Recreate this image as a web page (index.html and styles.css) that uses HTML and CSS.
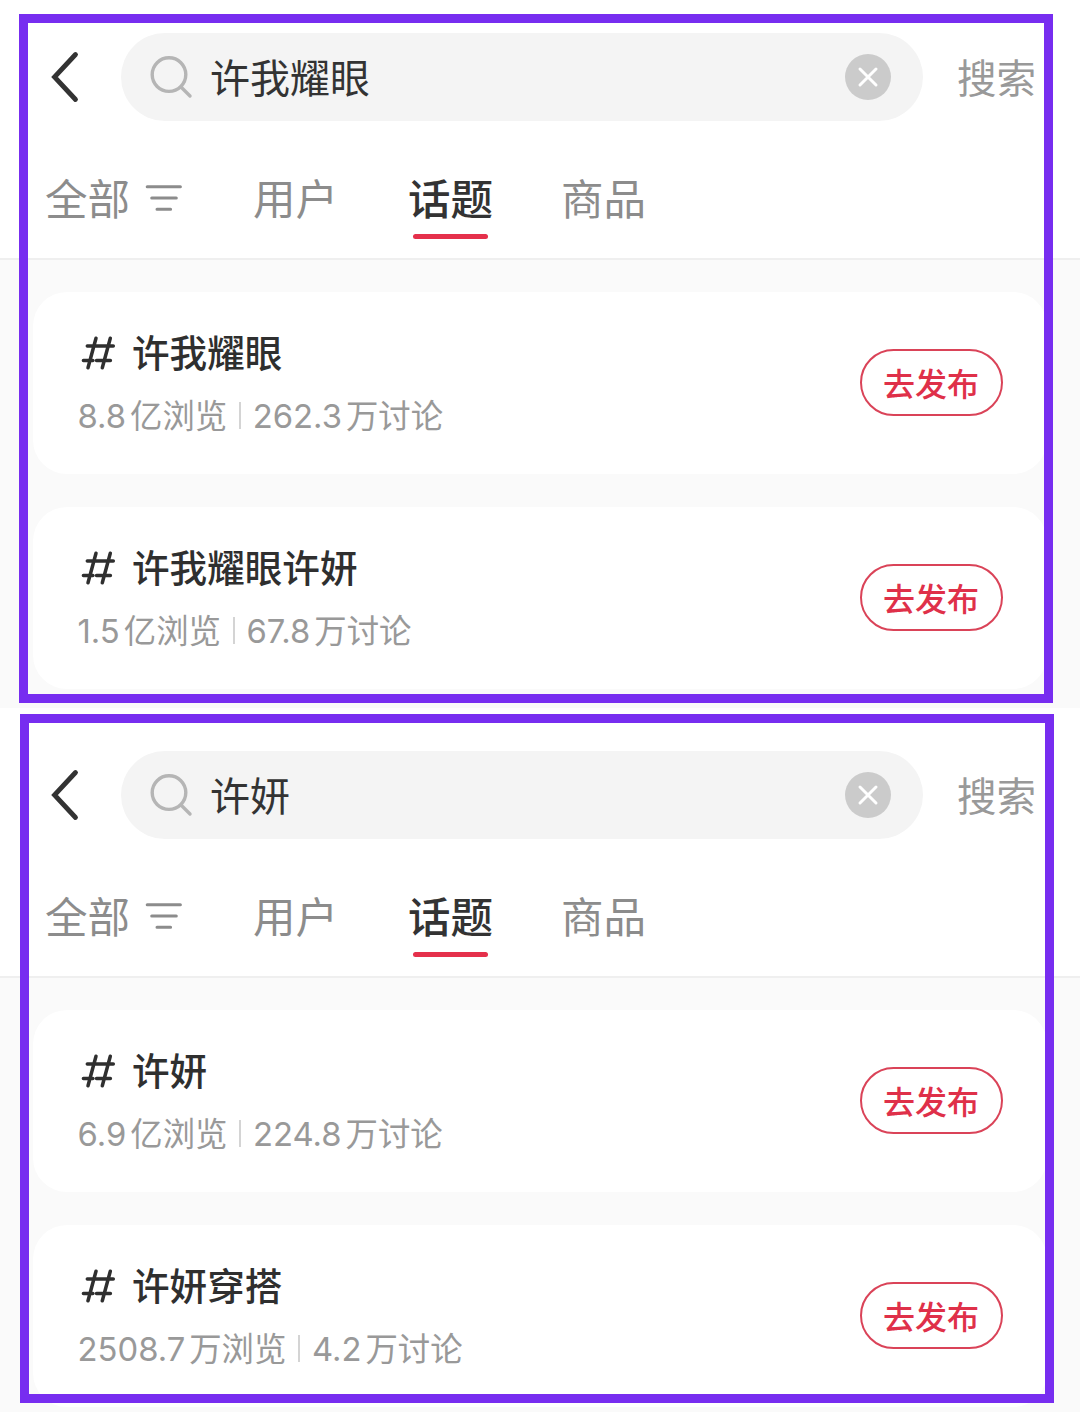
FILE: index.html
```html
<!DOCTYPE html>
<html lang="zh-CN">
<head>
<meta charset="utf-8">
<title>话题搜索</title>
<link rel="stylesheet" href="styles.css">
</head>
<body>
<svg class="sprite" aria-hidden="true">
  <symbol id="back" viewBox="0 0 30 54"><path d="M25.5 4.5 4.5 27l21 22.5" fill="none" stroke="#333" stroke-width="4.8" stroke-linecap="round" stroke-linejoin="miter"/></symbol>
  <symbol id="lens" viewBox="0 0 44 44"><g fill="none" stroke="#b5b5b5" stroke-width="3.4" stroke-linecap="round"><circle cx="20" cy="19.6" r="16.8"/><path d="m32 32 9 9"/></g></symbol>
  <symbol id="clear" viewBox="0 0 46 46"><circle cx="23" cy="23" r="23" fill="#cbcbcb"/><path d="m15 15 16 16M31 15 15 31" stroke="#fff" stroke-width="3" stroke-linecap="round"/></symbol>
  <symbol id="filter" viewBox="0 0 38 28"><path d="M2.2 2.7h33.2M6.7 14h24.6M12 25.3h13.6" stroke="#8c8c8c" stroke-width="3" stroke-linecap="round"/></symbol>
  <symbol id="hash" viewBox="0 0 36 36"><path d="M15 3.2 7 32.8M29.3 3.2l-8 29.6M6.3 11h26M2.4 25.6h9.5M15.5 25.6h13.9" fill="none" stroke="#2f2f2f" stroke-width="3.5" stroke-linecap="round"/></symbol>
</svg>

<section class="screen screen-first">
  <header class="head">
    <div class="search-row">
      <svg class="back"><use href="#back"/></svg>
      <div class="field">
        <svg class="lens"><use href="#lens"/></svg>
        <span class="query">许我耀眼</span>
        <svg class="clear"><use href="#clear"/></svg>
      </div>
      <span class="submit">搜索</span>
    </div>
    <nav class="tabs">
      <span class="tab tab-all">全部<svg class="filter"><use href="#filter"/></svg></span>
      <span class="tab tab-user">用户</span>
      <span class="tab tab-topic active">话题</span>
      <span class="tab">商品</span>
    </nav>
  </header>
  <main class="list">
    <article class="card">
      <div class="info">
        <h2 class="title"><svg class="hash"><use href="#hash"/></svg>许我耀眼</h2>
        <p class="stats"><span class="num">8.8</span>亿浏览<i class="bar"></i><span class="num">262.3</span>万讨论</p>
      </div>
      <button class="post">去发布</button>
    </article>
    <article class="card">
      <div class="info">
        <h2 class="title"><svg class="hash"><use href="#hash"/></svg>许我耀眼许妍</h2>
        <p class="stats"><span class="num">1.5</span>亿浏览<i class="bar"></i><span class="num">67.8</span>万讨论</p>
      </div>
      <button class="post">去发布</button>
    </article>
  </main>
  <div class="frame"></div>
</section>

<section class="screen screen-second">
  <header class="head">
    <div class="search-row">
      <svg class="back"><use href="#back"/></svg>
      <div class="field">
        <svg class="lens"><use href="#lens"/></svg>
        <span class="query">许妍</span>
        <svg class="clear"><use href="#clear"/></svg>
      </div>
      <span class="submit">搜索</span>
    </div>
    <nav class="tabs">
      <span class="tab tab-all">全部<svg class="filter"><use href="#filter"/></svg></span>
      <span class="tab tab-user">用户</span>
      <span class="tab tab-topic active">话题</span>
      <span class="tab">商品</span>
    </nav>
  </header>
  <main class="list">
    <article class="card">
      <div class="info">
        <h2 class="title"><svg class="hash"><use href="#hash"/></svg>许妍</h2>
        <p class="stats"><span class="num">6.9</span>亿浏览<i class="bar"></i><span class="num">224.8</span>万讨论</p>
      </div>
      <button class="post">去发布</button>
    </article>
    <article class="card">
      <div class="info">
        <h2 class="title"><svg class="hash"><use href="#hash"/></svg>许妍穿搭</h2>
        <p class="stats"><span class="num">2508.7</span>万浏览<i class="bar"></i><span class="num">4.2</span>万讨论</p>
      </div>
      <button class="post">去发布</button>
    </article>
  </main>
  <div class="frame"></div>
</section>
</body>
</html>
```

FILE: styles.css
```css
* { box-sizing: border-box; }

body {
  margin: 0;
  width: 1080px;
  height: 1412px;
  overflow: hidden;
  background: #fff;
  color: #333;
  font-family: "Noto Sans CJK SC", sans-serif;
}

.sprite { display: none; }

svg { display: block; flex: none; }

.screen {
  position: relative;
  overflow: hidden;
  background: #fafafa;
}

.screen-first { height: 708px; }
.screen-second { height: 704px; }

.head {
  height: 260px;
  padding-top: 33px;
  background: #fff;
  border-bottom: 2px solid #efefef;
}

.screen-second .head {
  height: 270px;
  padding-top: 43px;
}

.search-row {
  display: flex;
  align-items: center;
  height: 88px;
  padding-left: 50px;
}

.back { width: 30px; height: 54px; }

.field {
  display: flex;
  align-items: center;
  width: 802px;
  height: 88px;
  margin-left: 41px;
  padding: 0 32px 0 28px;
  border-radius: 44px;
  background: #f4f4f4;
}

.lens { width: 44px; height: 44px; }

.query {
  flex: 1;
  margin-left: 17px;
  padding-bottom: 3px;
  font-size: 40px;
  line-height: 56px;
}

.clear { width: 46px; height: 46px; }

.submit {
  margin-left: 34px;
  padding-bottom: 3px;
  font-size: 39.5px;
  line-height: 56px;
  color: #999;
}

.tabs {
  display: flex;
  align-items: flex-start;
  height: 92px;
  margin-top: 46px;
  padding-left: 45px;
}

.tab {
  position: relative;
  display: flex;
  align-items: center;
  height: 64px;
  padding-bottom: 6px;
  font-size: 42.5px;
  color: #8c8c8c;
}

.tab-all { width: 208px; }
.tab-user { width: 155px; }
.tab-topic { width: 153px; }

.filter { width: 38px; height: 28px; margin: 4px 0 0 15px; }

.active { color: #333; font-weight: 500; }

.active::after {
  content: "";
  position: absolute;
  left: 5px;
  top: 67px;
  width: 75px;
  height: 5px;
  border-radius: 3px;
  background: #e5304b;
}

.list {
  display: flex;
  flex-direction: column;
  gap: 33px;
  padding: 31.5px 33px 0;
}

.card {
  display: flex;
  align-items: center;
  justify-content: space-between;
  flex: none;
  height: 182px;
  padding: 0 44px 0 45px;
  border-radius: 34px;
  background: #fff;
}

.title {
  display: flex;
  align-items: center;
  height: 54px;
  margin: 0;
  padding-bottom: 5px;
  font-size: 37.6px;
  font-weight: 500;
  color: #2f2f2f;
}

.hash { width: 36px; height: 36px; margin: 5px 15px 0 3px; }

.stats {
  display: flex;
  align-items: center;
  height: 48px;
  margin: 11px 0 0;
  padding-bottom: 3px;
  font-size: 32.4px;
  color: #999;
}

.num {
  margin: 5px 4px 0 -0.5px;
  font-family: Inter, sans-serif;
  font-size: 32.8px;
}

.bar {
  width: 2px;
  height: 27px;
  margin: 3px 12px 0;
  background: #d4d4d4;
}

.post {
  width: 143px;
  height: 67px;
  padding: 0 1px 2px 0;
  border: 2px solid #da4358;
  border-radius: 34px;
  background: #fff;
  font-family: inherit;
  font-size: 32px;
  font-weight: 500;
  color: #df3049;
}

.frame {
  position: absolute;
  left: 19px;
  top: 13.5px;
  width: 1034px;
  height: 689px;
  border: 9px solid #772df0;
}

.screen-second .frame { left: 20px; top: 6px; }
```
